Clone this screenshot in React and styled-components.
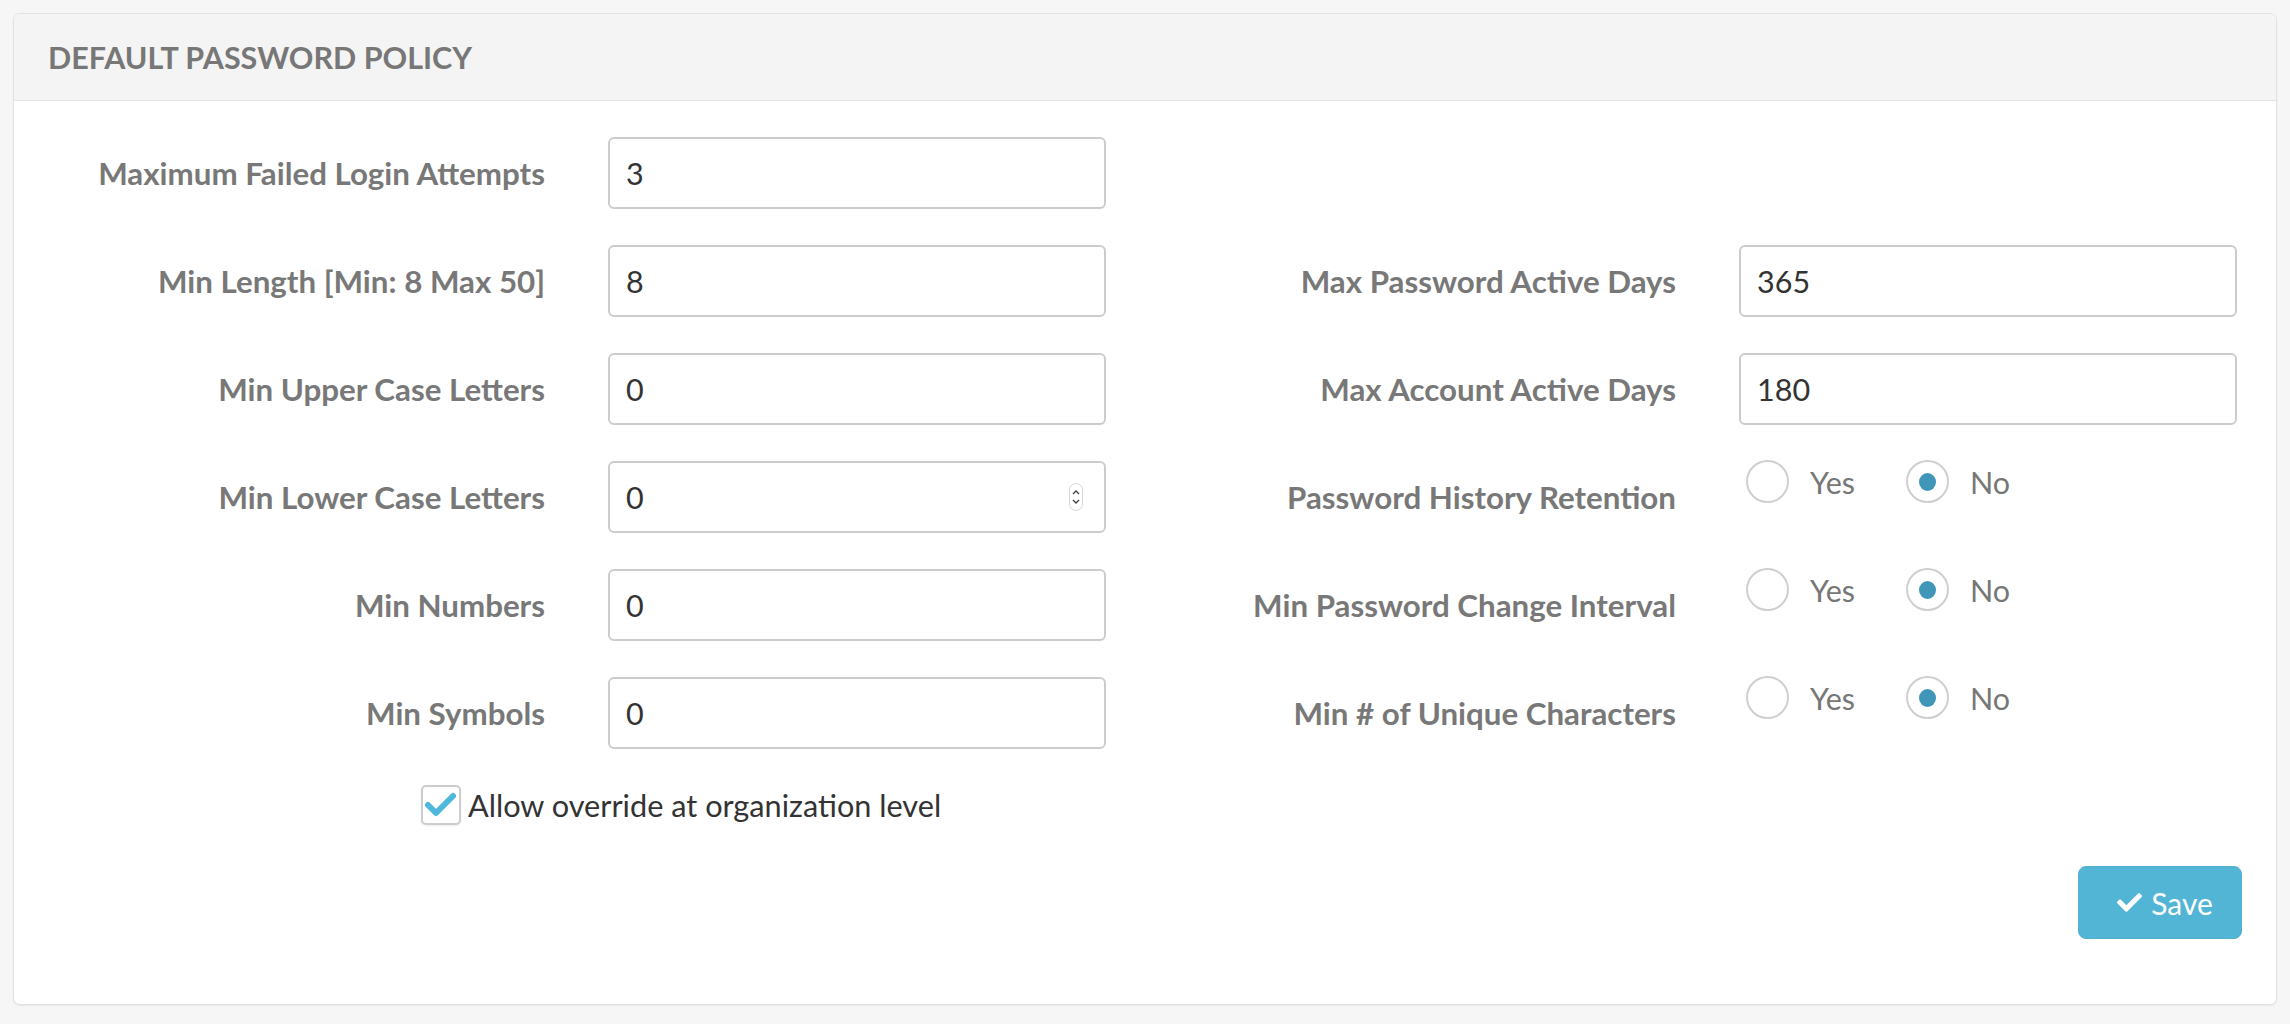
import React from "react";
import styled, { createGlobalStyle } from "styled-components";
import { FaCheck } from "react-icons/fa";

const Global = createGlobalStyle`
  html, body { margin: 0; padding: 0; background: #f6f6f6; }
  body { font-family: Lato, "Open Sans", sans-serif; }
  * { box-sizing: border-box; }
`;

const Page = styled.div`
  padding: 13px;
  background: #f6f6f6;
`;

const Panel = styled.section`
  background: #fff;
  border: 1px solid #e2e2e2;
  border-radius: 7px;
  box-shadow: 0 1px 2px rgba(0, 0, 0, 0.06);
  overflow: hidden;
`;

const Header = styled.header`
  height: 87px;
  display: flex;
  align-items: center;
  padding-left: 34px;
  background: #f4f4f4;
  border-bottom: 1px solid #e4e4e4;
  font-family: Lato, sans-serif;
  font-weight: 700;
  font-size: 30.5px;
  color: #777;
  text-transform: uppercase;
`;

const Body = styled.div`
  padding: 36px 0 0 0;
`;

const Grid = styled.div`
  display: grid;
  grid-template-columns: 1fr 1fr;
  row-gap: 36px;
`;

const Field = styled.div`
  display: grid;
  grid-template-columns: 531px 498px;
  column-gap: 63px;
  height: 72px;
  align-items: center;
`;

const Label = styled.label`
  text-align: right;
  font-family: Lato, sans-serif;
  font-weight: 700;
  font-size: 31.3px;
  color: #787878;
  white-space: nowrap;
`;

const InputWrap = styled.div`
  position: relative;
  height: 72px;
`;

const Input = styled.input`
  width: 100%;
  height: 72px;
  border: 2px solid #cccccc;
  border-radius: 6px;
  padding: 0 16px;
  font-family: Lato, sans-serif;
  font-size: 30.5px;
  color: #333;
  background: #fff;
  outline: none;
`;

const Spinner = styled.div`
  position: absolute;
  right: 23px;
  top: 22px;
  width: 14px;
  height: 28px;
  border: 1px solid #d6d6d6;
  border-radius: 7px;
  background: #fff;
  display: flex;
  align-items: center;
  justify-content: center;
`;

const RadioGroup = styled.div`
  align-self: start;
  margin-top: -1px;
  padding-left: 7px;
  display: flex;
  align-items: center;
  gap: 51px;
`;

const RadioOption = styled.label`
  display: flex;
  align-items: center;
  gap: 21px;
  font-family: Lato, sans-serif;
  font-size: 30.5px;
  color: #777;
`;

const RadioCircle = styled.span`
  width: 43px;
  height: 43px;
  border-radius: 50%;
  border: 2px solid #cfcfcf;
  background: #fff;
  display: flex;
  align-items: center;
  justify-content: center;
  &::after {
    content: "";
    width: 17px;
    height: 18px;
    border-radius: 50%;
    background: ${(p) => (p.$checked ? "#3f96b9" : "transparent")};
  }
`;

const CheckRow = styled.label`
  margin: 36px 0 0 407px;
  display: flex;
  align-items: center;
  gap: 7px;
  font-family: Lato, sans-serif;
  font-size: 30.7px;
  color: #333;
`;

const CheckBox = styled.span`
  width: 40px;
  height: 40px;
  border: 2px solid #cdcdcd;
  border-radius: 5px;
  background: #fff;
  box-shadow: 0 1px 2px rgba(0, 0, 0, 0.08);
  display: flex;
  align-items: center;
  justify-content: center;
`;

const Footer = styled.div`
  display: flex;
  justify-content: flex-end;
  padding: 41px 34px 65px 0;
`;

const SaveButton = styled.button`
  width: 164px;
  height: 73px;
  border: 1px solid #4fb0d2;
  border-radius: 8px;
  background: #53b5d6;
  color: #fff;
  font-family: Lato, sans-serif;
  font-size: 30px;
  display: flex;
  align-items: center;
  justify-content: center;
  gap: 9px;
  padding: 0 0 0 10px;
  cursor: pointer;
`;

const leftFields = [
  { label: "Maximum Failed Login Attempts", value: "3" },
  { label: "Min Length [Min: 8 Max 50]", value: "8" },
  { label: "Min Upper Case Letters", value: "0" },
  { label: "Min Lower Case Letters", value: "0", spinner: true },
  { label: "Min Numbers", value: "0" },
  { label: "Min Symbols", value: "0" },
];

const rightFields = [
  null,
  { label: "Max Password Active Days", value: "365" },
  { label: "Max Account Active Days", value: "180" },
  { label: "Password History Retention", radio: true },
  { label: "Min Password Change Interval", radio: true },
  { label: "Min # of Unique Characters", radio: true },
];

function TextField({ f }) {
  return (
    <Field>
      <Label>{f.label}</Label>
      <InputWrap>
        <Input defaultValue={f.value} />
        {f.spinner && (
          <Spinner>
            <svg width="10" height="20" viewBox="0 0 10 20">
              <path d="M2 7 L5 4 L8 7" fill="none" stroke="#444" strokeWidth="1.4" />
              <path d="M2 13 L5 16 L8 13" fill="none" stroke="#444" strokeWidth="1.4" />
            </svg>
          </Spinner>
        )}
      </InputWrap>
    </Field>
  );
}

function RadioField({ f }) {
  return (
    <Field>
      <Label>{f.label}</Label>
      <RadioGroup>
        <RadioOption>
          <RadioCircle />
          Yes
        </RadioOption>
        <RadioOption>
          <RadioCircle $checked />
          No
        </RadioOption>
      </RadioGroup>
    </Field>
  );
}

export default function App() {
  const cells = [];
  for (let i = 0; i < 6; i++) {
    cells.push(<TextField key={"l" + i} f={leftFields[i]} />);
    const r = rightFields[i];
    if (!r) cells.push(<div key={"r" + i} />);
    else if (r.radio) cells.push(<RadioField key={"r" + i} f={r} />);
    else cells.push(<TextField key={"r" + i} f={r} />);
  }
  return (
    <>
      <Global />
      <Page>
        <Panel>
          <Header>Default Password Policy</Header>
          <Body>
            <Grid>{cells}</Grid>
            <CheckRow>
              <CheckBox>
                <svg width="34" height="30" viewBox="0 0 34 30">
                  <polyline
                    points="4,15 12,23 29,6"
                    fill="none"
                    stroke="#4fb6dc"
                    strokeWidth="6"
                    strokeLinecap="round"
                    strokeLinejoin="round"
                  />
                </svg>
              </CheckBox>
              Allow override at organization level
            </CheckRow>
            <Footer>
              <SaveButton>
                <FaCheck size={25} />
                Save
              </SaveButton>
            </Footer>
          </Body>
        </Panel>
      </Page>
    </>
  );
}
